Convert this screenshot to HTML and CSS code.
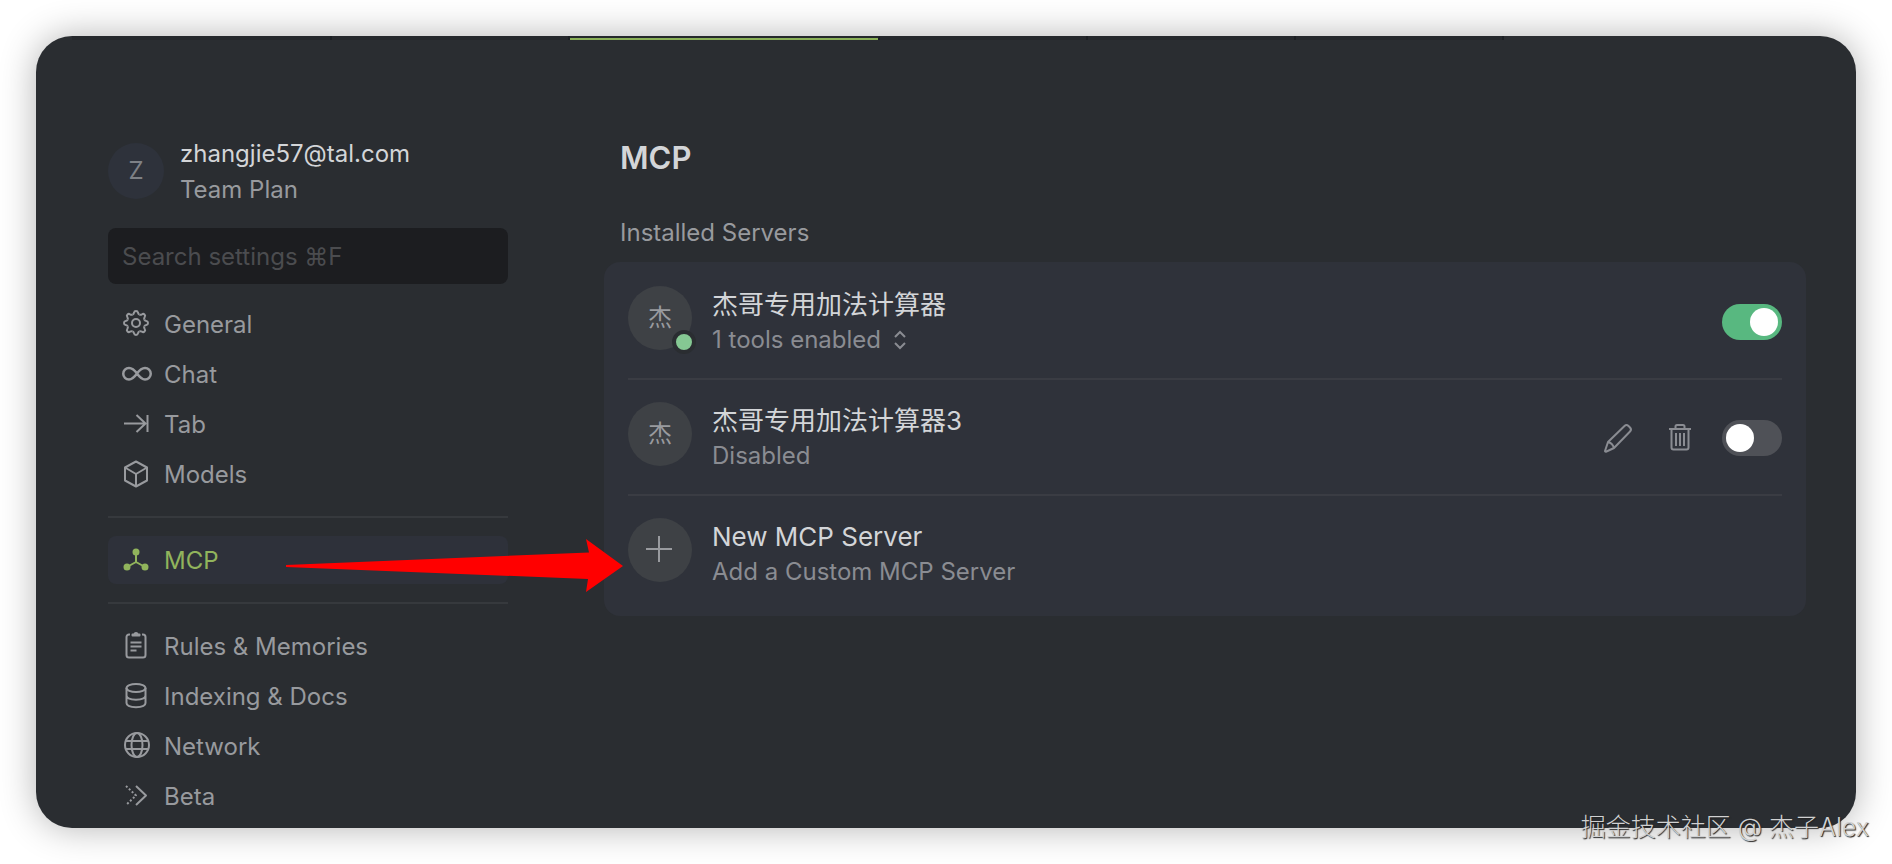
FILE: index.html
```html
<!DOCTYPE html>
<html lang="zh-CN">
<head>
    <meta charset="UTF-8">
    <meta name="viewport" content="width=device-width, initial-scale=1.0">
    <title>MCP Settings</title>
    <link rel="stylesheet" href="styles.css">
</head>
<body>
    <div class="window">
        <div class="tab-strip">
            <span class="tab tab-wide"></span>
            <span class="tab tab-medium"></span>
            <span class="tab tab-active"></span>
            <span class="tab"></span>
            <span class="tab"></span>
            <span class="tab"></span>
        </div>

        <div class="layout">
            <aside class="sidebar">
                <div class="account">
                    <span class="account-avatar">Z</span>
                    <div class="account-info">
                        <div class="account-email">zhangjie57@tal.com</div>
                        <div class="account-plan">Team Plan</div>
                    </div>
                </div>

                <input class="search" type="search" placeholder="Search settings ⌘F" aria-label="Search settings">

                <nav class="nav">
                    <a class="nav-item" href="#general">
                        <svg class="icon" viewBox="0 0 32 32">
                            <g transform="translate(16 15)">
                                <path id="tooth" d="M-3.44-8.31Q-2.300-8.770-1.900-10.400Q-1.700-12 0-12Q1.700-12 1.900-10.400Q2.300-8.770 3.440-8.310"/>
                                <use href="#tooth" transform="rotate(45)"/>
                                <use href="#tooth" transform="rotate(90)"/>
                                <use href="#tooth" transform="rotate(135)"/>
                                <use href="#tooth" transform="rotate(180)"/>
                                <use href="#tooth" transform="rotate(225)"/>
                                <use href="#tooth" transform="rotate(270)"/>
                                <use href="#tooth" transform="rotate(315)"/>
                                <circle r="4"/>
                            </g>
                        </svg>
                        <span>General</span>
                    </a>
                    <a class="nav-item" href="#chat">
                        <svg class="icon icon-bold" viewBox="0 0 32 32"><path d="M17 15.500c-2.500-3.500-5-5.500-8-5.500a5.500 5.500 0 0 0 0 11.500c3 0 5.500-2.500 8-6s5-5.500 8-5.500a5.500 5.500 0 0 1 0 11.500c-3 0-5.500-2.500-8-6z"/></svg>
                        <span>Chat</span>
                    </a>
                    <a class="nav-item" href="#tab">
                        <svg class="icon" viewBox="0 0 32 32"><path d="M4 15.500h21M16.500 7l9 8.500-9 8.500M27.500 7v17"/></svg>
                        <span>Tab</span>
                    </a>
                    <a class="nav-item" href="#models">
                        <svg class="icon" viewBox="0 0 32 32"><path d="M16 3.500L27 9.500v13L16 28.500 5 22.500v-13zM5 9.500l11 6.500 11-6.500M16 16v12.500"/></svg>
                        <span>Models</span>
                    </a>
                    <hr class="nav-line">
                    <a class="nav-item active" href="#mcp" aria-current="page">
                        <svg class="icon" viewBox="0 0 32 32"><path d="M16 8v10M16 18l-9 5M16 18l9 5"/><g class="fill"><circle cx="16" cy="8" r="2.500"/><circle cx="7" cy="23" r="2.500"/><circle cx="25" cy="23" r="2.500"/></g></svg>
                        <span>MCP</span>
                    </a>
                    <hr class="nav-line">
                    <a class="nav-item" href="#rules">
                        <svg class="icon" viewBox="0 0 32 32"><path d="M10 4.500H9a2.500 2.500 0 0 0-2.500 2.500v18A2.500 2.500 0 0 0 9 27.500h14a2.500 2.500 0 0 0 2.500-2.500V7A2.500 2.500 0 0 0 23 4.500h-1M10.500 12.500h11M10.500 16.500h11M10.500 20.500h6"/><path class="fill" d="M12.500 5.500V4.500h2a1.500 1.500 0 0 1 3 0h2v1z"/></svg>
                        <span>Rules &amp; Memories</span>
                    </a>
                    <a class="nav-item" href="#indexing">
                        <svg class="icon" viewBox="0 0 32 32"><ellipse cx="16" cy="8" rx="9.500" ry="4"/><path d="M6.500 8v15c0 5.500 19 5.500 19 0V8M6.500 15.500c0 5.500 19 5.500 19 0"/></svg>
                        <span>Indexing &amp; Docs</span>
                    </a>
                    <a class="nav-item" href="#network">
                        <svg class="icon" viewBox="0 0 32 32"><circle cx="17" cy="15" r="12"/><ellipse cx="17" cy="15" rx="5.500" ry="12"/><path d="M6 11h22M6 19h22"/></svg>
                        <span>Network</span>
                    </a>
                    <a class="nav-item" href="#beta">
                        <svg class="icon" viewBox="0 0 32 32"><path d="M16 6l10 9.500-10 9.500"/><path class="dotted" d="M6 6l10 9.500L6 25"/></svg>
                        <span>Beta</span>
                    </a>
                </nav>
            </aside>

            <main class="content">
                <h1>MCP</h1>
                <h2>Installed Servers</h2>

                <div class="card">
                    <section class="server">
                        <span class="server-avatar">杰<i class="status"></i></span>
                        <div class="server-info">
                            <div class="server-name">杰哥专用加法计算器</div>
                            <div class="server-note">1 tools enabled
                                <svg class="chevrons" viewBox="0 0 14 20"><path d="M2 7l5-5 5 5M2 13l5 5 5-5"/></svg>
                            </div>
                        </div>
                        <input class="toggle" type="checkbox" aria-label="杰哥专用加法计算器" checked>
                    </section>

                    <section class="server">
                        <span class="server-avatar">杰</span>
                        <div class="server-info">
                            <div class="server-name">杰哥专用加法计算器3</div>
                            <div class="server-note">Disabled</div>
                        </div>
                        <div class="server-actions">
                            <button class="icon-button" type="button" aria-label="Edit">
                                <svg class="icon" viewBox="0 0 32 32"><path d="M3 29l3-9L22.500 4q2-2 4 0l1.500 1.500q2 2 0 4L12 26l-7.500 3.500q-1.500.5-1.500-.5zM6 20q4.500 1 6 6"/></svg>
                            </button>
                            <button class="icon-button" type="button" aria-label="Delete">
                                <svg class="icon" viewBox="0 0 32 32"><path d="M5 7h22M11.500 7V4.500q0-1.500 1.500-1.500h6q1.500 0 1.500 1.500V7M7.500 7v18.500q0 2 2 2h13q2 0 2-2V7M12 11v13M16 11v13M20 11v13"/></svg>
                            </button>
                        </div>
                        <input class="toggle" type="checkbox" aria-label="杰哥专用加法计算器3">
                    </section>

                    <section class="server">
                        <button class="server-avatar" type="button" aria-label="New MCP Server">
                            <svg class="icon" viewBox="0 0 32 32"><path d="M2 15h26M15 2v26"/></svg>
                        </button>
                        <div class="server-info">
                            <div class="server-name">New MCP Server</div>
                            <div class="server-note">Add a Custom MCP Server</div>
                        </div>
                    </section>
                </div>
            </main>
        </div>

        <svg class="arrow" viewBox="0 0 338 54"><path d="M0 26L303 13.500 300 0l37 27-37 26 2-13L0 28z"/></svg>
    </div>

    <div class="watermark">掘金技术社区 @ 杰子Alex</div>
</body>
</html>
```

FILE: styles.css
```css
* {
    box-sizing: border-box;
}
body {
    margin: 0;
    padding: 36px;
    min-height: 100vh;
    display: flex;
    background: #fff;
    color: #989a9e;
    font-family: Inter, "Noto Sans CJK SC", sans-serif;
    font-size: 24px;
    line-height: 36px;
}
.window {
    position: relative;
    flex: 1;
    border-radius: 36px;
    background: #2a2d31;
    box-shadow: 0 0 36px rgba(0, 0, 0, 0.3);
}
.tab-strip {
    display: flex;
    height: 4px;
    padding-left: 36px;
    overflow: hidden;
}
.tab {
    flex: 0 0 208px;
    height: 4px;
    border-right: 2px solid #1b1f23;
    background: #25282c;
}
.tab-wide {
    flex-basis: 260px;
}
.tab-medium {
    flex-basis: 238px;
}
.tab-active {
    flex-basis: 310px;
    border-top: 2px solid #25282c;
    background: #8ab058;
}
.layout {
    display: flex;
    gap: 96px;
    padding: 94px 50px 8px 72px;
}
.sidebar {
    flex: 0 0 400px;
}
.account {
    display: flex;
    align-items: center;
    gap: 16px;
    margin-bottom: 20px;
}
.account-avatar {
    display: flex;
    align-items: center;
    justify-content: center;
    width: 56px;
    height: 56px;
    border-radius: 50%;
    background: #2e323b;
    color: #7e8186;
}
.account-info {
    padding-top: 2px;
}
.account-email {
    color: #d3d5d8;
}
.search {
    display: block;
    width: 100%;
    height: 56px;
    padding: 0 14px;
    border: none;
    border-radius: 8px;
    background: #1c1d20;
    color: #d3d5d8;
    font: inherit;
}
.search::placeholder {
    color: #4b4c4f;
}
.nav {
    display: flex;
    flex-direction: column;
    gap: 2px;
    margin-top: 16px;
}
.nav-item {
    display: flex;
    align-items: center;
    gap: 12px;
    height: 48px;
    padding: 0 12px;
    border-radius: 8px;
    color: inherit;
    text-decoration: none;
}
.nav-item span {
    padding-top: 2px;
}
.nav-item.active {
    background: #2e313a;
    color: #91b45c;
}
.nav-line {
    width: 100%;
    height: 2px;
    margin: 16px 0;
    border: none;
    background: #36393d;
}
.icon {
    flex: none;
    width: 32px;
    height: 32px;
    fill: none;
    stroke: currentColor;
    stroke-width: 2;
    stroke-linejoin: round;
}
.icon-bold {
    stroke-width: 2.5;
}
.fill {
    fill: currentColor;
}
.dotted {
    stroke-dasharray: 2 2;
}
.content {
    flex: 1;
}
h1 {
    margin: 4px 16px 37px;
    color: #d3d5d8;
    font-size: 31px;
    font-weight: 600;
    line-height: 40px;
}
h2 {
    margin: 0 16px 11px;
    font-size: 24px;
    font-weight: 400;
    line-height: 36px;
}
.card {
    padding: 2px 24px 4px;
    border-radius: 16px;
    background: #2f323a;
}
.server {
    display: flex;
    align-items: flex-start;
    height: 116px;
    padding-top: 22px;
    border-bottom: 2px solid #3a3c43;
}
.server:last-child {
    border-bottom: none;
}
.server-avatar {
    position: relative;
    display: flex;
    align-items: center;
    justify-content: center;
    width: 64px;
    height: 64px;
    margin-right: 20px;
    padding: 0;
    border: none;
    border-radius: 50%;
    background: #3e4145;
    color: #999b9f;
}
.status {
    position: absolute;
    right: -4px;
    bottom: -4px;
    width: 24px;
    height: 24px;
    border: 4px solid #2a2d31;
    border-radius: 50%;
    background: #85c893;
}
.server-info {
    flex: 1;
    padding-top: 2px;
}
.server-name {
    color: #d3d5d8;
    font-size: 26px;
    line-height: 34px;
}
.server-note {
    display: flex;
    align-items: center;
    gap: 12px;
    color: #8a8c92;
}
.chevrons {
    width: 14px;
    height: 20px;
    fill: none;
    stroke: currentColor;
    stroke-width: 2;
}
.server-actions {
    display: flex;
    gap: 30px;
    margin: 20px 26px 0 0;
}
.icon-button {
    display: flex;
    padding: 0;
    border: none;
    background: none;
    color: #8a8c92;
}
.toggle {
    appearance: none;
    width: 60px;
    height: 36px;
    margin: 18px 0 0;
    padding: 4px;
    border-radius: 18px;
    background: #4f5157;
}
.toggle::before {
    content: "";
    display: block;
    width: 28px;
    height: 28px;
    border-radius: 50%;
    background: #fff;
}
.toggle:checked {
    background: #58b880;
}
.toggle:checked::before {
    margin-left: auto;
}
.arrow {
    position: absolute;
    left: 250px;
    top: 503px;
    width: 338px;
    height: 54px;
    fill: #f00;
}
.watermark {
    position: absolute;
    right: 23px;
    bottom: 19px;
    color: #d0d1d2;
    font-size: 25px;
    font-weight: 300;
    text-shadow: 1px 1px 1px #222;
}
```
